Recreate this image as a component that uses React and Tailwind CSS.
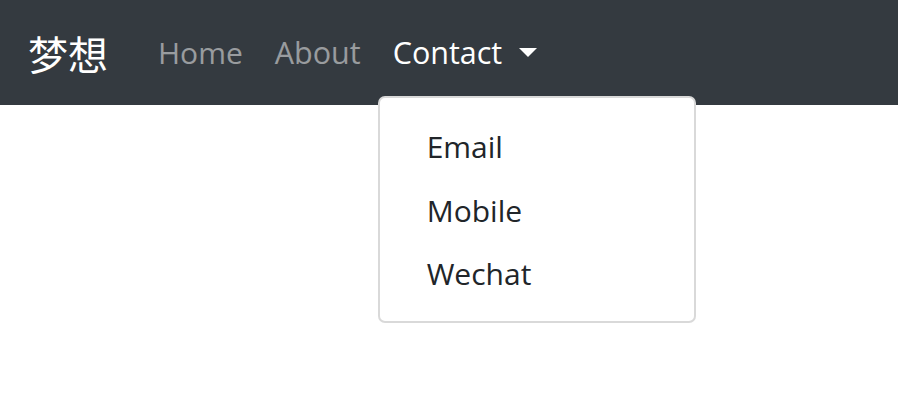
import React from 'react';

const font = { fontFamily: '"Open Sans", "Noto Sans CJK SC", sans-serif' };

export default function App() {
  return (
    <div className="min-h-[414px] bg-white" style={font}>
      <nav className="flex h-[105px] items-center bg-[#343a40] px-[28px]">
        <a className="mr-[34px] text-[40px] leading-none text-white" style={{ fontFamily: '"Noto Sans CJK SC", sans-serif' }}>
          梦想
        </a>
        <ul className="flex items-center">
          <li>
            <a className="block px-[16px] text-[30px] leading-[45px] text-white/50">Home</a>
          </li>
          <li>
            <a className="block px-[16px] text-[30.5px] leading-[45px] text-white/50">About</a>
          </li>
          <li className="relative">
            <a className="flex items-center px-[16px] text-[30.5px] leading-[45px] text-white">
              Contact
              <span className="ml-[17px] h-0 w-0 border-x-[9px] border-t-[9px] border-x-transparent border-t-white" />
            </a>
            <div className="absolute left-[1px] top-[66px] w-[318px] rounded-[7px] border-2 border-black/15 bg-white pb-[15px] pt-[17px]">
              <a className="block px-[47px] py-[8px] text-[30px] leading-[47.5px] text-[#212529]">Email</a>
              <a className="block px-[47px] py-[8px] text-[30px] leading-[47.5px] text-[#212529]">Mobile</a>
              <a className="block px-[47px] py-[8px] text-[30px] leading-[47.5px] text-[#212529]">Wechat</a>
            </div>
          </li>
        </ul>
      </nav>
    </div>
  );
}
